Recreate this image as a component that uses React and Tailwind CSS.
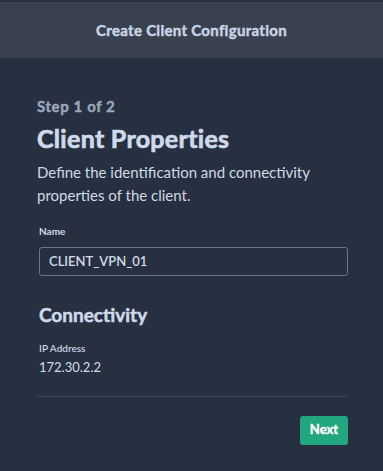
import React from "react";

export default function App() {
  return (
    <div className="min-h-[471px] w-full bg-[#263040] font-['Lato',sans-serif] text-[#d0d9e8]">
      {/* header */}
      <div className="h-[58px] border-t-2 border-[#2d3441] bg-[#3a414e] flex items-center justify-center">
        <h1 className="text-[15px] font-bold tracking-[0.3px] text-[#c9d4e6] [-webkit-text-stroke:0.45px_#c9d4e6]">
          Create Client Configuration
        </h1>
      </div>

      <div className="pl-[37px] pr-[35px] pt-[38px]">
        <p className="text-[15px] font-bold leading-[20px] tracking-[0.6px] text-[#9aa6b9] [-webkit-text-stroke:0.45px_#9aa6b9]">
          Step 1 of 2
        </p>
        <h2 className="mt-[6px] text-[25px] font-bold leading-[32px] tracking-[0.3px] text-[#cfd9ea] [-webkit-text-stroke:0.7px_#cfd9ea]">
          Client Properties
        </h2>
        <p className="mt-[7px] text-[15px] leading-[23px] text-[#d0d9e6]">
          Define the identification and connectivity properties of the client.
        </p>

        <div className="mt-[17px] pl-[2px]">
          <label className="block text-[10px] font-bold text-[#d3dcea]">Name</label>
          <div className="mt-[8px] h-[29px] rounded-[3px] border border-[#6e7583] flex items-center px-[9px]">
            <span className="text-[13px] font-semibold text-[#d3dcea]">CLIENT_VPN_01</span>
          </div>
        </div>

        <h3 className="mt-[25px] pl-[2px] text-[19px] font-bold leading-[28px] text-[#cfd9ea] [-webkit-text-stroke:0.5px_#cfd9ea]">
          Connectivity
        </h3>
        <div className="mt-[12px] pl-[2px]">
          <p className="text-[10px] font-semibold text-[#c9d3e3]">IP Address</p>
          <p className="mt-[2px] text-[13px] text-[#d3dcea]">172.30.2.2</p>
        </div>

        <div className="mt-[18px] border-t border-[#3e4553]" />

        <div className="mt-[19px] flex justify-end">
          <button className="h-[29px] w-[48px] rounded-[3px] bg-[#21a67f] text-[13px] font-bold text-white [-webkit-text-stroke:0.4px_#ffffff]">
            Next
          </button>
        </div>
      </div>
    </div>
  );
}
